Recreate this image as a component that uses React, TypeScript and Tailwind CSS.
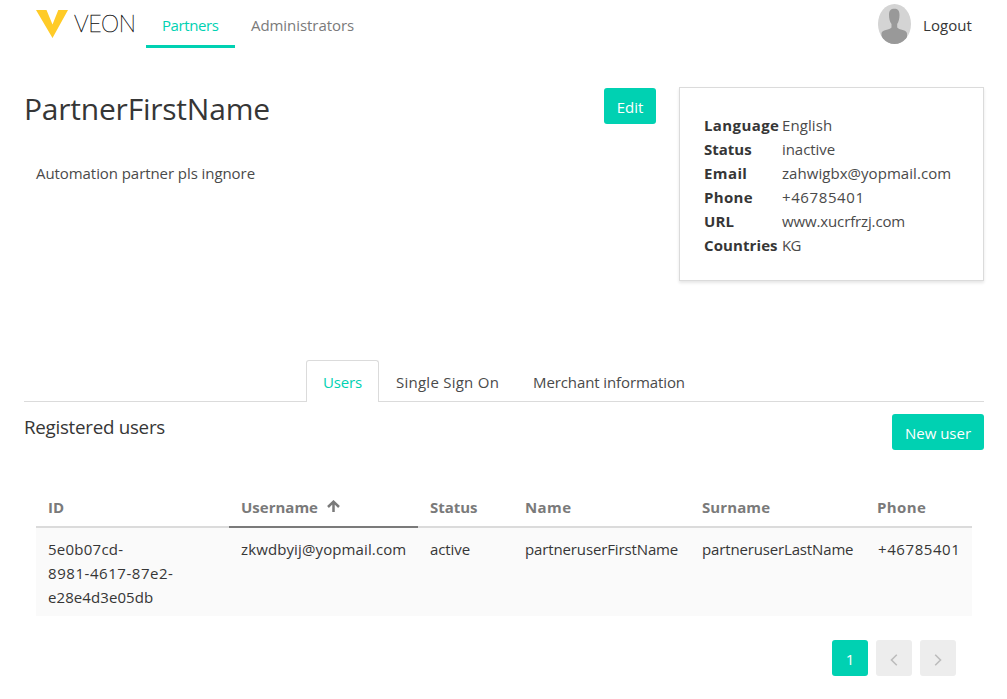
import type { ReactNode } from "react";

type Item = { text: string; tracking?: string };

const details: { label: Item; value: Item }[] = [
  { label: { text: "Language", tracking: "tracking-[0.4px]" }, value: { text: "English", tracking: "tracking-[0.1px]" } },
  { label: { text: "Status", tracking: "tracking-[0px]" }, value: { text: "inactive", tracking: "tracking-[-0.06px]" } },
  { label: { text: "Email", tracking: "tracking-[0.4px]" }, value: { text: "zahwigbx@yopmail.com", tracking: "tracking-[0.05px]" } },
  { label: { text: "Phone", tracking: "tracking-[0.35px]" }, value: { text: "+46785401", tracking: "tracking-[0.6px]" } },
  { label: { text: "URL", tracking: "tracking-[0.1px]" }, value: { text: "www.xucrfrzj.com", tracking: "tracking-[-0.13px]" } },
  { label: { text: "Countries", tracking: "tracking-[0.1px]" }, value: { text: "KG", tracking: "tracking-[-0.6px]" } },
];

function VeonLogo() {
  return (
    <a href="#" aria-label="VEON" className="flex h-12 w-[110px] shrink-0 items-start">
      <svg className="mt-[10px] h-7 w-8 shrink-0" viewBox="0 0 32 28">
        <path d="M0 0h10.500l6 14.500L22.300 0H32L16.500 28z" fill="#ffcb27" />
      </svg>
      <span className="ml-[6px] mt-[11px] font-['Lato',sans-serif] text-[23px] font-thin leading-6 tracking-[-0.35px] text-[#1a1a1a] [-webkit-text-stroke:0.5px_#1a1a1a]">VEON</span>
    </a>
  );
}

function Avatar() {
  return (
    <svg className="h-10 w-[33px] shrink-0" viewBox="0 0 33 40">
      <defs>
        <clipPath id="avatar-clip">
          <ellipse cx="16.500" cy="20" rx="16.500" ry="20" />
        </clipPath>
      </defs>
      <g clipPath="url(#avatar-clip)">
        <path d="M0 0h33v40H0z" fill="#d4d4d4" />
        <path d="M11 11c0-4.500 1.800-6.200 5.300-6.200s5.200 1.700 5.200 6.200c0 3.500-.8 7-2.300 9v3.500c1.500 2.500 9.800 2 9.800 6v11H3.500V29.500c0-4 8.500-3.500 10-6V20c-1.700-2-2.500-5.500-2.500-9z" fill="#999" />
      </g>
    </svg>
  );
}

function Button({ children, className = "" }: { children: ReactNode; className?: string }) {
  return (
    <button className={`h-9 shrink-0 rounded-[3px] bg-[#00d1b2] pb-[5px] pt-[7px] leading-6 text-white ${className}`}>
      {children}
    </button>
  );
}

function Head({ children, sorted = false }: { children: ReactNode; sorted?: boolean }) {
  return (
    <th className={`border-b-2 px-3 pb-[7px] pt-[7px] text-left font-bold text-[#7a7a7a] ${sorted ? "border-[#7a7a7a]" : "border-[#dbdbdb]"}`}>
      {children}
    </th>
  );
}

function Cell({ children }: { children: ReactNode }) {
  return <td className="whitespace-nowrap px-3 pb-[7px] pt-[9px] align-top">{children}</td>;
}

export default function App() {
  return (
    <div className="h-[699px] overflow-hidden bg-white font-['Open_Sans',sans-serif] text-[15px] leading-6 text-[#363636]">
      <nav className="flex h-[52px] items-start pl-9 pr-[35px]">
        <VeonLogo />
        <a href="#" className="h-12 w-[89px] border-b-[3px] border-[#00d1b2] pl-4 pt-[13px] tracking-[-0.4px] text-[#00d1b2]">Partners</a>
        <a href="#" className="pl-4 pt-[13px] tracking-[-0.06px] text-[#7a7a7a]">Administrators</a>
        <div className="ml-auto flex items-start gap-3 pt-1">
          <Avatar />
          <a href="#" className="w-[49px] pt-[9px] tracking-[0.08px]">Logout</a>
        </div>
      </nav>

      <main className="pl-6 pr-[23px]">
        <section className="flex h-[308px] items-start pt-[35px]">
          <div className="flex-1">
            <h1 className="pt-1 text-[30px] leading-9 tracking-[-0.22px]">PartnerFirstName</h1>
            <p className="pl-3 pt-[34px] tracking-[-0.07px] text-[#4a4a4a]">Automation partner pls ingnore</p>
          </div>
          <Button className="mt-px w-[52px]">Edit</Button>
          <dl className="ml-[23px] h-[194px] w-[305px] border border-[#dbdbdb] px-6 pt-[25px] shadow-[0_2px_3px_rgba(10,10,10,0.1)]">
            {details.map(({ label, value }) => (
              <div key={label.text} className="flex h-6">
                <dt className={`w-[78px] shrink-0 whitespace-nowrap font-bold ${label.tracking ?? ""}`}>{label.text}</dt>
                <dd className={`whitespace-nowrap text-[#4a4a4a] ${value.tracking ?? ""}`}>{value.text}</dd>
              </div>
            ))}
          </dl>
        </section>

        <div className="flex h-[42px] text-[#4a4a4a]">
          <div className="w-[282px] border-b border-[#dbdbdb]" />
          <a href="#" className="w-[73px] rounded-t-[3px] border border-b-0 border-[#dbdbdb] pl-4 pt-[9px] tracking-[-0.15px] text-[#00d1b2]">Users</a>
          <a href="#" className="w-[137px] border-b border-[#dbdbdb] pl-[17px] pt-[10px] tracking-[0.25px]">Single Sign On</a>
          <a href="#" className="flex-1 border-b border-[#dbdbdb] pl-[17px] pt-[10px] tracking-[-0.1px]">Merchant information</a>
        </div>

        <div className="flex h-[85px] items-start justify-between pt-3">
          <h2 className="pt-px text-[18.750px] leading-6 tracking-[-0.27px]">Registered users</h2>
          <Button className="w-[92px]">New user</Button>
        </div>

        <div className="px-3">
          <table className="w-[936px] table-fixed border-collapse">
            <colgroup>
              <col className="w-[193px]" />
              <col className="w-[189px]" />
              <col className="w-[95px]" />
              <col className="w-[177px]" />
              <col className="w-[176px]" />
              <col className="w-[106px]" />
            </colgroup>
            <thead>
              <tr className="h-10">
                <Head>ID</Head>
                <Head sorted>
                  <span className="flex items-center">
                    Username
                    <svg className="mb-px ml-[9px] h-3 w-[13px]" viewBox="0 0 13 12">
                      <path d="M6.500 12V2M1 7l5.500-5.300L12 7" fill="none" stroke="#7a7a7a" strokeWidth="2.500" />
                    </svg>
                  </span>
                </Head>
                <Head><span className="tracking-[-0.05px]">Status</span></Head>
                <Head><span className="tracking-[0.4px]">Name</span></Head>
                <Head><span className="tracking-[0.1px]">Surname</span></Head>
                <Head><span className="-ml-px tracking-[0.4px]">Phone</span></Head>
              </tr>
            </thead>
            <tbody>
              <tr className="h-[88px] bg-[#fafafa]">
                <Cell>
                  <span className="tracking-[0.25px]">5e0b07cd-</span><br />
                  <span className="tracking-[0.55px]">8981-4617-87e2-</span><br />
                  <span className="tracking-[0.08px]">e28e4d3e05db</span>
                </Cell>
                <Cell><span className="tracking-[0.12px]">zkwdbyij@yopmail.com</span></Cell>
                <Cell><span className="tracking-[-0.1px]">active</span></Cell>
                <Cell><span className="tracking-[-0.13px]">partneruserFirstName</span></Cell>
                <Cell><span className="tracking-[-0.15px]">partneruserLastName</span></Cell>
                <Cell><span className="tracking-[0.58px]">+46785401</span></Cell>
              </tr>
            </tbody>
          </table>
        </div>

        <div className="flex justify-end gap-2 pr-7 pt-6">
          <Button className="w-9">1</Button>
          <button aria-label="Previous" className="flex h-9 w-9 items-center justify-center rounded-[3px] bg-[#ededed]">
            <svg className="mt-[3px] h-3 w-2" viewBox="0 0 8 12"><path d="M6.800.8L1.500 6l5.300 5.200" fill="none" stroke="#bcbcbc" strokeWidth="1.600" /></svg>
          </button>
          <button aria-label="Next" className="flex h-9 w-9 items-center justify-center rounded-[3px] bg-[#ededed]">
            <svg className="mt-[3px] h-3 w-2" viewBox="0 0 8 12"><path d="M1.200.8L6.500 6l-5.300 5.200" fill="none" stroke="#bcbcbc" strokeWidth="1.600" /></svg>
          </button>
        </div>
      </main>
    </div>
  );
}
